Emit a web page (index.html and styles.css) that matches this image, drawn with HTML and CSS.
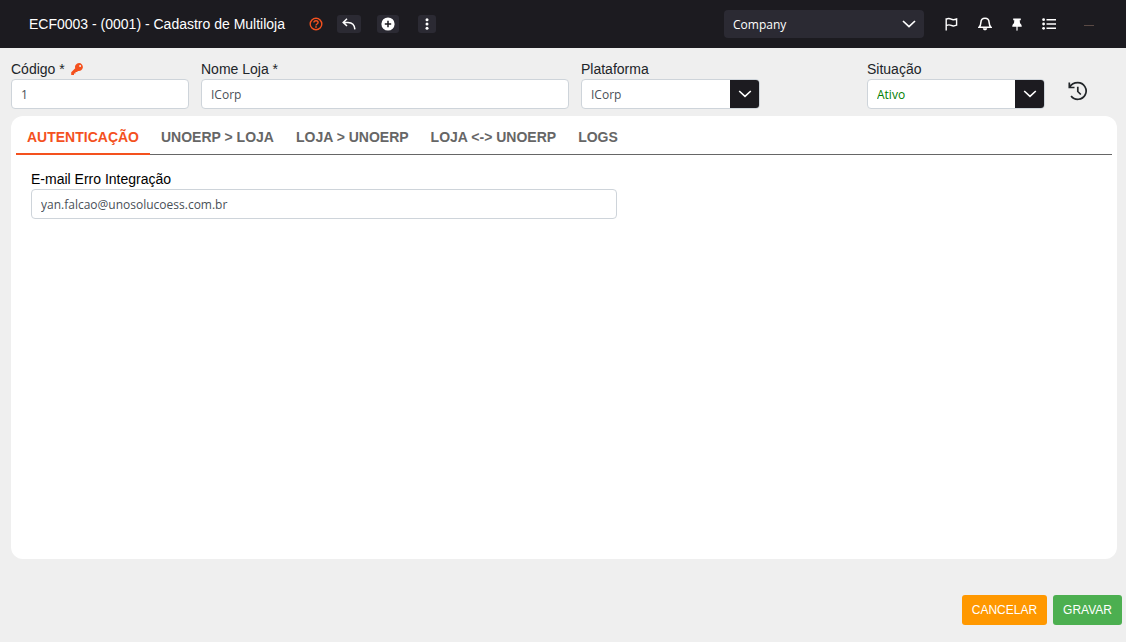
FILE: index.html
```html
<!DOCTYPE html>
<html lang="pt-BR">
<head>
<meta charset="utf-8">
<title>ECF0003 - Cadastro de Multiloja</title>
<link rel="stylesheet" href="styles.css">
</head>
<body>
<header class="topbar">
  <h1 class="title">ECF0003 - (0001) - Cadastro de Multiloja</h1>
  <div class="tools">
    <button class="help" type="button" aria-label="Ajuda">
      <svg width="14" height="14" viewBox="0 0 14 14" fill="none" stroke="currentColor" stroke-width="1.4"><circle cx="7" cy="7" r="5.8"/><path d="M4.900 5.600C4.900 4.300 5.800 3.700 7 3.700s2.100.7 2.100 1.800C9.100 6.900 7 7 7 8.400"/><path d="M7 9.200v1.500" stroke-width="1.600"/></svg>
    </button>
    <button class="tool tool-wide" type="button" aria-label="Voltar">
      <svg width="14" height="12" viewBox="0 0 14 12" fill="none" stroke="currentColor" stroke-width="1.5"><path d="M5 .8 1.2 4.4 5 8M1.4 4.4H6c4 0 6.6 2.6 6.9 7"/></svg>
    </button>
    <button class="tool" type="button" aria-label="Novo">
      <svg width="14" height="14" viewBox="0 0 14 14"><circle cx="7" cy="7" r="6.6" fill="currentColor"/><path d="M7 3.8v6.4M3.8 7h6.4" stroke="#1c1b20" stroke-width="1.5"/></svg>
    </button>
    <button class="tool tool-narrow" type="button" aria-label="Mais">
      <svg width="4" height="12" viewBox="0 0 4 12" fill="currentColor"><circle cx="2" cy="1.7" r="1.5"/><circle cx="2" cy="6" r="1.5"/><circle cx="2" cy="10.3" r="1.5"/></svg>
    </button>
  </div>
  <div class="company">
    <select class="company-select" aria-label="Empresa"><option>Company</option></select>
    <svg class="company-arrow" width="14" height="8" viewBox="0 0 14 8" fill="none" stroke="currentColor" stroke-width="1.7"><path d="m1 1 6 5.6L13 1"/></svg>
  </div>
  <nav class="actions">
    <button class="action" type="button" aria-label="Marcar">
      <svg width="13" height="14" viewBox="0 0 13 14" fill="none" stroke="currentColor" stroke-width="1.4"><path d="M1.2 13.4V1.2M1.2 2.2c2.4-1.4 3.6-.8 5 0s2.800.8 5.400-.2v6.200c-2.600 1.200-4 .9-5.400.2s-2.600-1-5 .2"/></svg>
    </button>
    <button class="action" type="button" aria-label="Notificações">
      <svg width="14" height="14" viewBox="0 0 14 14" fill="none" stroke="currentColor" stroke-width="1.5"><path d="M1 10.300C2.400 9 2.800 7.600 2.900 5.400 3 2.900 4.500 1.300 7 1.300s4 1.600 4.100 4.100c.1 2.200.5 3.600 1.900 4.900z"/><path d="M4.800 11.200h4.400C9 12.600 8.200 13.300 7 13.300s-2-.7-2.200-2.100z" fill="currentColor" stroke="none"/></svg>
    </button>
    <button class="action" type="button" aria-label="Fixar">
      <svg width="10" height="13" viewBox="0 0 10 13" fill="currentColor"><path d="M1.200.5h7.600v1.700H7.700L8 5.200c1 .6 1.600 1.500 1.700 2.900v.7H5.600v3.400L5 13l-.6-.8V8.800H.3v-.7c.1-1.400.7-2.300 1.700-2.900l.3-3H1.200z"/></svg>
    </button>
    <button class="action" type="button" aria-label="Lista">
      <svg width="14" height="12" viewBox="0 0 14 12" fill="currentColor"><path d="M4.500.9H14v1.500H4.500zM4.500 5.200H14v1.500H4.500zM4.500 9.500H14V11H4.500z"/><circle cx="1.600" cy="1.700" r="1.400"/><circle cx="1.600" cy="6" r="1.400"/><circle cx="1.600" cy="10.300" r="1.400"/></svg>
    </button>
    <button class="action minimize" type="button" aria-label="Minimizar">
      <svg width="10" height="3" viewBox="0 0 10 3"><path d="M0 2.500h10" stroke="currentColor"/></svg>
    </button>
  </nav>
</header>
<main class="page">
  <form class="form" id="store">
    <div class="field">
      <label class="label" for="codigo">Código *
        <svg class="key" width="12" height="12" viewBox="0 0 12 12"><path fill="currentColor" fill-rule="evenodd" d="M8 0a4 4 0 0 0-3.800 5.200L.2 9.200V12H3v-1.500h1.500V9H6l1-1.100A4 4 0 1 0 8 0zm1.100 1.900a1 1 0 1 1 0 2 1 1 0 0 1 0-2z"/></svg>
      </label>
      <input class="control" id="codigo" type="text" value="1">
    </div>
    <div class="field">
      <label class="label" for="nome">Nome Loja *</label>
      <input class="control" id="nome" type="text" value="ICorp">
    </div>
    <div class="field">
      <label class="label" for="plataforma">Plataforma</label>
      <div class="select">
        <select class="control" id="plataforma"><option>ICorp</option></select>
        <span class="arrow"><svg width="14" height="8" viewBox="0 0 14 8" fill="none" stroke="currentColor" stroke-width="1.600"><path d="m1.200 1 5.800 5.400L12.800 1"/></svg></span>
      </div>
    </div>
    <div class="field field-status">
      <label class="label" for="situacao">Situação</label>
      <div class="select">
        <select class="control active" id="situacao"><option>Ativo</option></select>
        <span class="arrow"><svg width="14" height="8" viewBox="0 0 14 8" fill="none" stroke="currentColor" stroke-width="1.600"><path d="m1.200 1 5.800 5.400L12.800 1"/></svg></span>
      </div>
    </div>
    <button class="history" type="button" aria-label="Histórico">
      <svg width="20" height="20" viewBox="0 0 20 20" fill="none" stroke="currentColor" stroke-width="1.700"><path d="M1.300 1.500v5h5.200M1.700 6.200C3.300 3.300 6 1.700 9.800 1.700a8.300 8.300 0 1 1-6.700 13.200"/><path d="M9.800 5.800v4.700l3 3"/></svg>
    </button>
  </form>
  <section class="card">
    <div class="tabs" role="tablist">
      <button class="tab selected" type="button" role="tab" aria-selected="true">AUTENTICAÇÃO</button>
      <button class="tab" type="button" role="tab">UNOERP &gt; LOJA</button>
      <button class="tab" type="button" role="tab">LOJA &gt; UNOERP</button>
      <button class="tab" type="button" role="tab">LOJA &lt;-&gt; UNOERP</button>
      <button class="tab" type="button" role="tab">LOGS</button>
    </div>
    <div class="panel" role="tabpanel">
      <div class="email">
        <label class="label label-dark" for="email">E-mail Erro Integração</label>
        <input class="control" id="email" type="email" value="yan.falcao@unosolucoess.com.br">
      </div>
    </div>
  </section>
</main>
<footer class="footer">
  <button class="btn cancel" type="button">CANCELAR</button>
  <button class="btn save" type="submit" form="store">GRAVAR</button>
</footer>
</body>
</html>
```
FILE: styles.css
```css
* { box-sizing: border-box; }
body {
  margin: 0;
  min-height: 100vh;
  display: flex;
  flex-direction: column;
  background: #efefef;
  color: #212529;
  font: 14px/20px "Liberation Sans", Arial, sans-serif;
}
button, input, select { font: inherit; margin: 0; }
button { border: 0; padding: 0; background: none; color: inherit; }
svg { display: block; }

.topbar {
  display: flex;
  align-items: center;
  height: 48px;
  padding: 0 32px 0 29px;
  background: #1c1b20;
  color: #fff;
}
.title { margin: 0; font-size: 14px; font-weight: 400; white-space: nowrap; }
.tools { display: flex; align-items: center; margin-left: 24px; }
.help { color: #f4511e; }
.tool {
  display: flex;
  align-items: center;
  justify-content: center;
  width: 22px;
  height: 18px;
  margin-left: 16px;
  border-radius: 3px;
  background: #2b2a33;
}
.tool-wide { width: 24px; margin-left: 14px; }
.tool-narrow { width: 18px; margin-left: 19px; }

.company { position: relative; width: 200px; margin-left: auto; }
.company-select {
  appearance: none;
  display: block;
  width: 100%;
  height: 28px;
  padding: 1px 30px 0 9px;
  border: 0;
  border-radius: 4px;
  background: #2b2a33;
  color: #fff;
  font: 12px/16px "Open Sans", sans-serif;
}
.company-arrow { position: absolute; right: 8px; top: 10px; pointer-events: none; }
.actions { display: flex; align-items: center; gap: 20px; margin-left: 21px; }
.action { display: block; }
.minimize { margin-left: 8px; color: #5a4a45; }

.page { flex: 1; display: flex; flex-direction: column; padding: 11px 9px 0 11px; }
.form {
  display: grid;
  grid-template-columns: 178fr 368fr 179fr 83fr 178fr 60fr;
  column-gap: 12px;
  margin-bottom: 7px;
}
.field { min-width: 0; }
.field-status { grid-column: 5; }
.label { display: flex; align-items: center; gap: 6px; height: 20px; }
.label-dark { color: #000; }
.key { color: #f4511e; }
.control {
  display: block;
  width: 100%;
  height: 30px;
  padding: 1px 9px 0;
  border: 1px solid #ced4da;
  border-radius: 4px;
  outline: 0;
  background: #fff;
  color: #495057;
  font: 12px/16px "Open Sans", sans-serif;
}
.select { position: relative; }
.select .control { appearance: none; padding-right: 36px; }
.select .active { color: green; }
.arrow {
  position: absolute;
  top: 1px;
  right: 1px;
  bottom: 1px;
  width: 29px;
  display: flex;
  align-items: center;
  justify-content: center;
  border-radius: 0 3px 3px 0;
  background: #1c1b20;
  color: #fff;
  pointer-events: none;
}
.history { align-self: start; justify-self: start; margin: 22px 0 0 11px; }

.card { flex: 1; padding: 0 5px; border-radius: 12px; background: #fff; }
.tabs { display: flex; height: 39px; border-bottom: 1px solid #666; }
.tab {
  height: 39px;
  padding: 5px 11px 0;
  border-bottom: 2px solid transparent;
  color: #666;
  font-weight: 700;
  white-space: nowrap;
}
.selected { border-color: #f4511e; color: #f4511e; }
.panel { padding: 14px 15px; }
.email { width: 55%; }

.footer { display: flex; justify-content: flex-end; gap: 6px; padding: 36px 4px 17px; }
.btn {
  height: 30px;
  padding: 0 10px;
  border-radius: 3px;
  color: #fff;
  font-size: 12px;
}
.cancel { background: #ff9800; }
.save { background: #4caf50; }
```
